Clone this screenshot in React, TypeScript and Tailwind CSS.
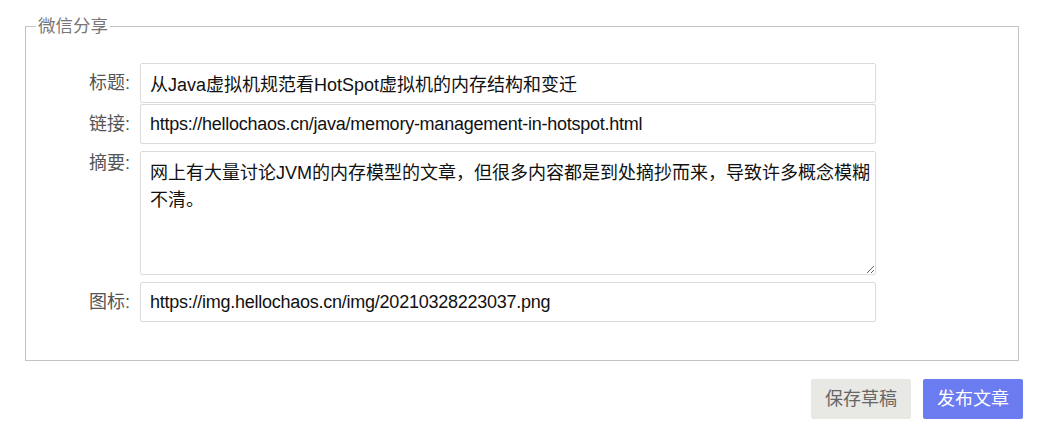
import React from "react";

const font = { fontFamily: '"Liberation Sans", "Noto Sans CJK SC", sans-serif' };

function Row({ label, children, top = "mt-0" }: { label: string; children: React.ReactNode; top?: string }) {
  return (
    <div className={`flex items-start ${top}`}>
      <label className="w-[114px] shrink-0 pr-[10px] pt-[8px] text-right text-[18px] leading-[24px] text-[#555]">
        {label}
      </label>
      {children}
    </div>
  );
}

const inputCls =
  "h-[40px] w-[736px] rounded-[2px] border border-[#dcdcdc] bg-white px-[9px] text-[18px] text-[#111] outline-none";

export default function App() {
  return (
    <div className="w-[1040px] h-[433px] bg-white pl-[25px] pr-[21px] pt-[16px]" style={font}>
      <fieldset className="border border-[#c4c4c4] pl-0 pr-0 pt-[27px] pb-[38px] ml-0">
        <legend className="ml-[10px] px-[2px] text-[17.5px] leading-[20px] text-[#777]">微信分享</legend>
        <Row label="标题:">
          <input className={inputCls} defaultValue="从Java虚拟机规范看HotSpot虚拟机的内存结构和变迁" />
        </Row>
        <Row label="链接:" top="mt-[1px]">
          <input
            className={`${inputCls} tracking-[-0.25px]`}
            defaultValue="https://hellochaos.cn/java/memory-management-in-hotspot.html"
          />
        </Row>
        <Row label="摘要:" top="mt-[-1px]">
          <textarea
            className="mt-[8px] h-[124px] w-[736px] rounded-[2px] border border-[#dcdcdc] bg-white pl-[9px] pr-[2px] pt-[8px] text-[18px] leading-[27px] text-[#111] outline-none"
            defaultValue="网上有大量讨论JVM的内存模型的文章，但很多内容都是到处摘抄而来，导致许多概念模糊不清。"
          />
        </Row>
        <Row label="图标:" top="mt-[7px]">
          <input
            className={`${inputCls} tracking-[-0.25px]`}
            defaultValue="https://img.hellochaos.cn/img/20210328223037.png"
          />
        </Row>
      </fieldset>
      <div className="mt-[18px] flex justify-end gap-[12px] -mr-[4px]">
        <button className="h-[40px] w-[100px] rounded-[2px] bg-[#e8e8e4] text-[18px] text-[#666]">保存草稿</button>
        <button className="h-[40px] w-[100px] rounded-[2px] bg-[#6b7bf0] text-[18px] text-white">发布文章</button>
      </div>
    </div>
  );
}
